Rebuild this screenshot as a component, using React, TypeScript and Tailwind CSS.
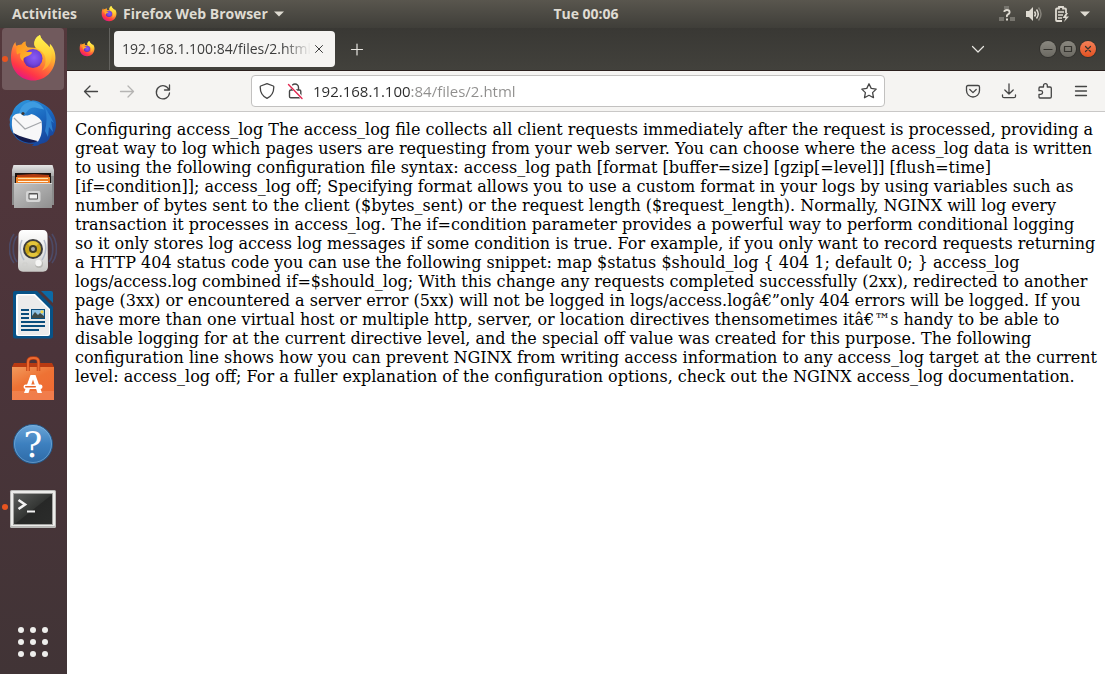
import React, { useId } from "react";

type IconProps = { className?: string };

function FirefoxIcon({ className = "size-12" }: IconProps) {
  const id = useId();
  const u = (n: string) => `url(#${id}${n})`;
  return (
    <svg viewBox="0 0 48 48" className={`${className} overflow-visible`} aria-hidden="true">
      <defs>
        <linearGradient id={`${id}a`} x1="0.8" y1="0.1" x2="0.3" y2="1">
          <stop offset="0" stopColor="#fff44f" />
          <stop offset="0.3" stopColor="#ffb52e" />
          <stop offset="0.58" stopColor="#ff6a3a" />
          <stop offset="0.8" stopColor="#ff3647" />
          <stop offset="1" stopColor="#e31587" />
        </linearGradient>
        <linearGradient id={`${id}b`} x1="0.5" y1="0" x2="0.5" y2="1">
          <stop offset="0" stopColor="#fff44f" />
          <stop offset="0.5" stopColor="#ffd53a" />
          <stop offset="1" stopColor="#ff9a2c" />
        </linearGradient>
        <radialGradient id={`${id}c`} cx="0.55" cy="0.45" r="0.6">
          <stop offset="0" stopColor="#8a5cf6" />
          <stop offset="0.6" stopColor="#7245dd" />
          <stop offset="1" stopColor="#5b2aa8" />
        </radialGradient>
        <linearGradient id={`${id}d`} x1="0" y1="0" x2="1" y2="1">
          <stop offset="0" stopColor="#ff8f1f" />
          <stop offset="1" stopColor="#ffbd2e" />
        </linearGradient>
      </defs>
      <path fill={u("a")} d="M2 23C2 17 3 11 6.5 7c0 1.800.4 3 1.300 4 1.500-1 3-1.400 4.700-1.300C13.500 8.300 14.700 7.200 16.500 6.500c-.5 2.500.2 4.300 2 5.800L27 13c-2-2.300-2.300-5-1-8 1-2.300 2.700-4 5-5 .6 3.200 2.800 5.500 5.600 7.900 1.500 1.300 2.900 2.700 4 4.300.4-1.100.4-2.200.2-3.500C44.500 12 46.500 17 46.400 23 46 36 36.500 45.500 24.200 45.500 12 45.500 2.200 36 2 23z" />
      <circle cx="24" cy="23.500" r="9.500" fill={u("c")} />
      <path fill={u("b")} d="M27 13c-2-2.300-2.300-5-1-8 1-2.300 2.700-4 5-5 .6 3.200 2.800 5.500 5.600 7.900C41 11.700 43.500 16.500 42.500 23c-.8 6-4.500 10.500-9.500 12.500 3-3.500 4-7.500 3.500-12C35.800 18.500 32 15.500 27 13z" />
      <path fill={u("d")} d="M7.800 11c1.500-1 3-1.400 4.700-1.300 1-1.400 2.200-2.500 4-3.200-.5 2.500.2 4.300 2 5.800-1.800 1.200-2.800 2.700-2.900 4.200 2 .5 4.800.4 7.400.8-.3 2.100-2.700 3.300-5.500 4.200-2 .7-3.600 2-3.600 4.500-2.900-2-3.500-5-2.400-8-1.400.3-2.400.7-3.500 1.500-.8-2.900-.9-5.900-.2-8.500z" />
    </svg>
  );
}

function ThunderbirdIcon() {
  return (
    <svg viewBox="0 0 48 48" className="size-12" aria-hidden="true">
      <defs>
        <linearGradient id="tbBlue" x1="0.2" y1="0" x2="0.8" y2="1">
          <stop offset="0" stopColor="#2f96dc" />
          <stop offset="0.5" stopColor="#1a67bf" />
          <stop offset="1" stopColor="#173f95" />
        </linearGradient>
      </defs>
      <path fill="url(#tbBlue)" d="M1 23c-1-3 0-6 2-8C5 7 12 2 18 1c2 0 3 0 4 1 3-1 7 0 10 2 7 3 12 8 14 15 2 7 1 12-2 17l-3 1c0 3-3 6-6 7l-4 1c-2 2-5 2-8 2l2-2C16 45 8 42 5 36L3 33c-2-3-3-7-2-10z" />
      <path fill="#2b7fd0" d="M36 8l9 16-3-2 2 11-4-5-1 10-3-6c2-8 2-16 0-24z" />
      <path fill="#3e9be0" d="M10 15C11 8 16 3 23 2.500c6 .5 10 4 12 8l-9-2c-7-.5-8 6-13 9.500 0-2-1-3-3-3z" />
      <path fill="#f7f7f8" d="M3.500 18c2-3 5-4 8-3.500l3 2.500c3-1 5 0 8-2 4 1 7 3 10 7C33.500 30 33 37 29 42.500 20 41 10 39 4.500 34 2.500 29 2.500 23 3.500 18z" />
      <path d="M5 19l11 11 16.500-7" fill="none" stroke="#a3a6aa" strokeWidth="1.200" />
      <circle cx="14" cy="14.500" r="1.600" fill="#3c3634" />
      <path fill="#151c4c" d="M4.500 34c7 4 16 6 24 8-2 1.500-6 2-10 1.500C12 42.500 7 39 4.500 34z" />
    </svg>
  );
}

function FilesIcon() {
  return (
    <svg viewBox="0 0 48 48" className="size-12" aria-hidden="true">
      <defs>
        <linearGradient id="cabFront" x1="0" y1="0" x2="1" y2="1">
          <stop offset="0" stopColor="#c4c4c4" />
          <stop offset="0.5" stopColor="#a9a9a9" />
          <stop offset="1" stopColor="#8f8f8f" />
        </linearGradient>
        <linearGradient id="cabTop" x1="0" y1="0" x2="0" y2="1">
          <stop offset="0" stopColor="#e6e6e6" />
          <stop offset="1" stopColor="#a8a8a8" />
        </linearGradient>
      </defs>
      <path fill="#8b8b8b" d="M3 8h42v34H3z" />
      <path fill="url(#cabTop)" d="M4.500 2h39L45 7v6H3V7z" />
      <path fill="#1c1412" d="M6 10h36v11H6z" />
      <path fill="#b23c10" d="M8 12l17-1 15 1v4H8z" />
      <path fill="#f08127" d="M7 14h34v6H7z" />
      <path fill="#ffe0a8" d="M9 15h30v1H9z" />
      <path fill="#fff4df" d="M9 18h30v1H9z" />
      <path fill="url(#cabFront)" d="M5 20h38v25H5z" />
      <path fill="#d8d8d8" d="M5 20h38v1H5z" />
      <rect x="17" y="28" width="14.500" height="11" rx="2" fill="#d5d5d5" />
      <rect x="19.500" y="30" width="9.500" height="6.500" rx="1" fill="#555" />
      <rect x="20.500" y="31.500" width="7.500" height="4" fill="#f3f3f3" />
    </svg>
  );
}

function SpeakerIcon() {
  return (
    <svg viewBox="0 0 48 48" className="size-12" aria-hidden="true">
      <defs>
        <linearGradient id="spk" x1="0" y1="0" x2="0" y2="1">
          <stop offset="0" stopColor="#ffffff" />
          <stop offset="0.6" stopColor="#e2e2e0" />
          <stop offset="1" stopColor="#c9c9c6" />
        </linearGradient>
      </defs>
      <g fill="none" stroke="#4c639b" strokeOpacity="0.45" strokeWidth="1.700">
        <path d="M8 9C3 15 3 29 8 35M5 7C-1 15-1 29 5 36" />
        <path d="M40 9c5 6 5 20 0 26M43 7c6 8 6 22 0 29" />
      </g>
      <path fill="url(#spk)" d="M14 3h20c3 0 4.500 2 4.500 5L39 39c0 4-2 5.700-5 5.700H14c-3 0-5-2-5-5.700L9.500 8c0-3 1.500-5 4.500-5z" />
      <path fill="none" stroke="#b4bccb" strokeWidth="1.500" d="M13 13c-3 6-2 14 2 20M35 13c3 6 2 14-2 20" />
      <circle cx="24" cy="22" r="10" fill="#3d3d3d" />
      <circle cx="24" cy="22" r="8" fill="#c8a51a" />
      <path d="M24 22l-5.500-5.500a8 8 0 0 1 11 0zM24 22l5.500 5.500a8 8 0 0 1-11 0z" fill="#e3c53b" />
      <circle cx="24" cy="22" r="4" fill="#3f3b28" />
      <circle cx="24" cy="22" r="2" fill="#a8aaa9" />
      <circle cx="30" cy="37" r="4" fill="#b8b8b4" />
      <circle cx="29.500" cy="36" r="3.300" fill="#f5f5f4" />
      <path d="M14 36h4v4h-4z" fill="none" stroke="#cfcfcc" />
    </svg>
  );
}

function WriterIcon() {
  return (
    <svg viewBox="0 0 48 48" className="size-12" aria-hidden="true">
      <path fill="#075287" d="M6 0h22l16 16v29.500a2 2 0 0 1-2 2H6a2 2 0 0 1-2-2V2a2 2 0 0 1 2-2z" />
      <path fill="#0c6aa6" d="M32 0h10a2 2 0 0 1 2 2v10z" />
      <path fill="#fff" d="M7 5a2 2 0 0 1 2-2h17l15 15v25a2 2 0 0 1-2 2H9a2 2 0 0 1-2-2z" />
      <path fill="#ebebeb" d="M9 4.500h16L40 19v23a2 2 0 0 1-2 2H9z" />
      <path fill="#0a4d7c" d="M12 18h8v2h-8zM12 22h8v2h-8zM12 26h8v2h-8zM12 30h24v2H12zM12 34h24v2H12zM12 38h18v2H12zM22 18h14v10H22z" />
      <path fill="#8fc1e3" d="M23 19h12v8H23z" />
      <circle cx="33" cy="20.800" r="1.600" fill="#f5d547" />
      <path fill="#3f4a48" d="M23 27v-2l3-4 3 3 2-2 4 3v2z" />
    </svg>
  );
}

function SoftwareIcon() {
  return (
    <svg viewBox="0 0 48 48" className="size-12" aria-hidden="true">
      <defs>
        <linearGradient id="bag" x1="0" y1="0" x2="0.6" y2="1">
          <stop offset="0" stopColor="#f29a5c" />
          <stop offset="0.5" stopColor="#ee7234" />
          <stop offset="1" stopColor="#ef6a33" />
        </linearGradient>
      </defs>
      <path fill="#b83a12" d="M5 8h38l2 4H3z" />
      <path fill="url(#bag)" d="M3 12h42v33H3z" />
      <path fill="#ffffff" fillOpacity="0.12" d="M3 36h42v9H3z" />
      <path fill="none" stroke="#b93d12" strokeWidth="3.400" d="M19 16V7q0-4 5-4h1q4.500 0 4.500 4v9" />
      <path fill="none" stroke="#ec6a31" strokeWidth="2" d="M19 16V7q0-4 5-4h1q4.500 0 4.500 4v9" />
      <path fill="#fff" d="M21.500 20h5L33 38h-4.500L24 24.500 19.500 38H15z" />
      <rect x="14.500" y="29.500" width="19" height="4.500" rx="2.200" fill="#fff" />
      <rect x="16" y="31" width="11" height="1.500" rx="0.700" fill="#e86427" />
    </svg>
  );
}

function HelpIcon() {
  return (
    <svg viewBox="0 0 48 48" className="size-12" aria-hidden="true">
      <defs>
        <linearGradient id="help" x1="0" y1="0" x2="0" y2="1">
          <stop offset="0" stopColor="#6ba6d8" />
          <stop offset="0.5" stopColor="#3d80bf" />
          <stop offset="1" stopColor="#2e6aa6" />
        </linearGradient>
      </defs>
      <circle cx="24" cy="25" r="19.500" fill="url(#help)" stroke="#255787" />
      <circle cx="24" cy="25" r="18.500" fill="none" stroke="#8cbce2" strokeOpacity="0.5" />
      <text x="24" y="38" textAnchor="middle" fill="#fff" fontSize="35" fontFamily="'DejaVu Serif', serif">?</text>
    </svg>
  );
}

function TerminalIcon() {
  return (
    <svg viewBox="0 0 48 48" className="size-12" aria-hidden="true">
      <defs>
        <linearGradient id="term" x1="0" y1="0" x2="1" y2="1">
          <stop offset="0" stopColor="#5b5d5b" />
          <stop offset="0.5" stopColor="#343634" />
          <stop offset="0.52" stopColor="#272827" />
          <stop offset="1" stopColor="#2b2c2b" />
        </linearGradient>
      </defs>
      <rect x="1" y="7" width="46" height="38" rx="1.500" fill="#b9b9b7" />
      <rect x="2" y="8" width="44" height="35" rx="1" fill="#ececea" />
      <rect x="4" y="10" width="40" height="32" fill="#a2a2a0" />
      <rect x="5" y="11" width="38" height="30" fill="url(#term)" />
      <path d="M9.500 17l6.500 4.500-6.500 4.500" fill="none" stroke="#f3f3f3" strokeWidth="2.600" />
      <path d="M18 28.500h8" stroke="#f3f3f3" strokeWidth="2" />
    </svg>
  );
}

function Stroke({ d, size = "size-4", width = 1.2, className = "" }: { d: string; size?: string; width?: number; className?: string }) {
  return (
    <svg viewBox="0 0 16 16" className={`${size} ${className} shrink-0 overflow-visible`} fill="none" stroke="currentColor" strokeWidth={width} strokeLinecap="round" strokeLinejoin="round" aria-hidden="true">
      <path d={d} />
    </svg>
  );
}

function Caret() {
  return (
    <svg viewBox="0 0 10 6" className="h-1.5 w-2.5 shrink-0 fill-current" aria-hidden="true">
      <path d="M0 .5h10L5 5.500z" />
    </svg>
  );
}

function TopBar() {
  return (
    <header className="flex h-7 shrink-0 items-center bg-linear-to-b from-[#59564e] to-[#3f3e39] font-['Open_Sans','Noto_Sans',sans-serif] text-sm leading-5 font-bold text-[#dfdbd2]">
      <div className="flex flex-1 basis-0 items-center gap-6 pl-3">
        <button type="button">Activities</button>
        <button type="button" className="flex items-center gap-1.5 whitespace-nowrap">
          <FirefoxIcon className="size-4" />
          <span>Firefox Web Browser</span>
          <Caret />
        </button>
      </div>
      <button type="button" className="ml-[70px] whitespace-nowrap">Tue 00:06</button>
      <div className="flex flex-1 basis-0 items-center justify-end pr-[15px]">
        <button type="button" aria-label="System menu" className="flex items-center gap-[11px]">
          <svg viewBox="0 0 16 16" className="size-4" aria-hidden="true">
            <path fill="#77756e" d="M5 0h5v3H5zM0 11h5v4H0zM11 11h5v4h-5z" />
            <path fill="none" stroke="currentColor" strokeWidth="1.900" d="M5.200 5.800Q5.500 4 8 4t2.600 2.200Q10.600 7.500 9 8.400T8 11" />
            <path fill="currentColor" d="M7 12.500h2v2H7z" />
          </svg>
          <svg viewBox="0 0 16 16" className="size-4" aria-hidden="true">
            <path fill="currentColor" d="M0 5h3l4-4v14l-4-4H0z" />
            <path fill="none" stroke="currentColor" strokeWidth="1.500" d="M8.500 5.500q2 2.500 0 5M10.500 3.500q3.500 4.500 0 9" />
            <path fill="none" stroke="#85827a" strokeWidth="1.500" d="M12.500 1.500q5 6.500 0 13" />
          </svg>
          <svg viewBox="0 0 16 16" className="size-4" aria-hidden="true">
            <path fill="none" stroke="currentColor" strokeWidth="1.800" d="M13 7V3.500q0-1-1-1h-2V1H6v1.500H4q-1 0-1 1V14q0 1 1 1h5" />
            <path stroke="currentColor" strokeWidth="1.500" d="M5 6h6M5 9h5M5 12h4" />
            <path fill="currentColor" d="M13 7l-3.500 5h3L11 16l5-5.500h-3L15 7z" />
          </svg>
          <Caret />
        </button>
      </div>
    </header>
  );
}

const apps = [
  { name: "Firefox Web Browser", icon: <FirefoxIcon />, running: true, active: true },
  { name: "Thunderbird Mail", icon: <ThunderbirdIcon /> },
  { name: "Files", icon: <FilesIcon /> },
  { name: "Rhythmbox", icon: <SpeakerIcon /> },
  { name: "LibreOffice Writer", icon: <WriterIcon /> },
  { name: "Ubuntu Software", icon: <SoftwareIcon /> },
  { name: "Help", icon: <HelpIcon /> },
  { name: "Terminal", icon: <TerminalIcon />, running: true },
];

function Dock() {
  return (
    <nav aria-label="Dock" className="flex w-[67px] shrink-0 flex-col gap-0.5 bg-linear-to-b from-[#54383c] via-[#4b343a] to-[#413436] pl-0.5">
      {apps.map((app) => (
        <button
          key={app.name}
          type="button"
          aria-label={app.name}
          className={`relative flex size-[62px] shrink-0 items-center justify-center rounded ${app.active ? "bg-[#715a5d]" : ""}`}
        >
          {app.running && <span className="absolute left-0 size-1.5 rounded-full bg-[#e95420]" />}
          {app.icon}
        </button>
      ))}
      <button type="button" aria-label="Show Applications" className="mt-auto mb-px flex size-[62px] items-center justify-center">
        <svg viewBox="0 0 30 30" className="size-[30px] fill-[#eeeeec]" aria-hidden="true">
          {[3, 15, 27].map((y) => [3, 15, 27].map((x) => <circle key={`${x}-${y}`} cx={x} cy={y} r="3" />))}
        </svg>
      </button>
    </nav>
  );
}

function TabBar() {
  const control = "flex size-4 items-center justify-center rounded-full ring-1 ring-[#33322e]";
  return (
    <div className="flex h-[43px] shrink-0 items-center border-b border-[#2b201e] bg-linear-to-b from-[#393834] to-[#42413c] text-[#e8e6e1]">
      <button type="button" aria-label="Pinned tab" className="flex h-full w-[43px] items-center justify-center border-r border-[#63625e] pr-0.5">
        <FirefoxIcon className="size-4" />
      </button>
      <div className="ml-1 flex h-9 w-[221px] items-center rounded bg-[#f5f4f2] px-2 text-[#3d3d3d]">
        <button type="button" className="min-w-0 flex-1 overflow-hidden mask-r-from-85% text-left font-['Open_Sans','Noto_Sans',sans-serif] text-sm leading-5 whitespace-nowrap">
          192.168.1.100:84/files/2.html
        </button>
        <button type="button" aria-label="Close tab" className="flex size-4 items-center justify-center">
          <Stroke d="M4.500 4.500l7 7M11.500 4.500l-7 7" width={1} />
        </button>
      </div>
      <button type="button" aria-label="New tab" className="ml-3 flex size-5 items-center justify-center">
        <Stroke d="M2.500 8.500h11M8 3v11" />
      </button>
      <button type="button" aria-label="List all tabs" className="mr-[54px] ml-auto flex size-4 items-center justify-center">
        <Stroke d="M2.500 5.500L8 11l5.500-5.500" />
      </button>
      <div className="flex gap-1 pr-[9px] text-[#35342f]">
        <button type="button" aria-label="Minimize" className={`${control} bg-linear-to-b from-[#8a8880] to-[#6b6962]`}>
          <Stroke d="M4 8.500h8" />
        </button>
        <button type="button" aria-label="Maximize" className={`${control} bg-linear-to-b from-[#8a8880] to-[#6b6962]`}>
          <Stroke d="M4.500 5.500h7v5h-7z" />
        </button>
        <button type="button" aria-label="Close" className={`${control} bg-linear-to-b from-[#f58057] to-[#e2511f]`}>
          <Stroke d="M5.500 5.500l5 5M10.500 5.500l-5 5" />
        </button>
      </div>
    </div>
  );
}

function ToolButton({ label, d, disabled }: { label: string; d: string; disabled?: boolean }) {
  return (
    <button type="button" aria-label={label} disabled={disabled} className="flex size-8 shrink-0 items-center justify-center disabled:text-[#b5b4b3]">
      <Stroke d={d} width={1.3} />
    </button>
  );
}

function Toolbar() {
  return (
    <div className="flex h-[41px] shrink-0 items-center border-b border-[#c9c8c7] bg-[#f5f4f2] px-2 text-[#454545]">
      <div className="flex gap-1">
        <ToolButton label="Back" d="M1.500 8.500h13M7 3L1.500 8.500 7 14" />
        <ToolButton label="Forward" disabled d="M14.500 8.500h-13M9 3L14.500 8.500 9 14" />
        <ToolButton label="Reload" d="M14.500 2V7H9.500M14 6.700A6.600 6.600 0 1 0 14.500 10" />
      </div>
      <div className="mx-[72px] flex h-8 min-w-0 flex-1 items-center rounded border border-[#c2c1c0] bg-white px-[7px]">
        <button type="button" aria-label="Tracking protection">
          <Stroke d="M8 .7L14.300 3Q14.800 3.200 14.800 4C14.800 9.500 12 13.500 8 15.300 4 13.500 1.200 9.500 1.200 4Q1.200 3.200 1.700 3z" width={1.3} />
        </button>
        <button type="button" aria-label="Connection is not secure" className="ml-3">
          <svg viewBox="0 0 16 16" className="size-4 overflow-visible" fill="none" strokeWidth="1.400" strokeLinecap="round" aria-hidden="true">
            <path stroke="currentColor" d="M4.500 7V4.500a3.500 3.500 0 0 1 7 0V7M4 7h8.500q1.300 0 1.300 1.300v5.200q0 1.300-1.300 1.300H3.800q-1.300 0-1.300-1.300V8.300Q2.500 7 4 7z" />
            <path stroke="#fff" strokeWidth="3" d="M2.500 1.500l12 13" />
            <path stroke="#e22850" d="M1.500 1.500l13.500 14" />
          </svg>
        </button>
        <input
          type="text"
          aria-label="Address"
          defaultValue="192.168.1.100:84/files/2.html"
          className="ml-2.5 min-w-0 flex-1 bg-linear-to-r from-[#2b2b2b] from-[98px] to-[#8f8e8d] to-[98px] bg-clip-text font-['Open_Sans','Noto_Sans',sans-serif] text-[15px] leading-5 text-transparent caret-black outline-none"
        />
        <button type="button" aria-label="Bookmark this page">
          <Stroke d="M8 .8L10.200 5.400 15.200 6.100 11.600 9.600 12.500 14.700 8 12.300 3.500 14.700 4.400 9.600.8 6.100 5.800 5.400z" width={1.3} />
        </button>
      </div>
      <div className="flex gap-1">
        <ToolButton label="Save to Pocket" d="M3 2.500h10q1.500 0 1.500 1.500v3.500a6.500 6.500 0 0 1-13 0V4Q1.500 2.500 3 2.500zM4.800 6.500L8 9.600l3.200-3.100" />
        <ToolButton label="Downloads" d="M8 .8v10M3.800 7L8 11l4.200-4M1.500 12v1.200q0 1.500 1.500 1.500h10q1.500 0 1.500-1.500V12" />
        <ToolButton label="Extensions" d="M6.500 4V2.500a1.900 1.900 0 0 1 3.800 0V4H13q1.300 0 1.300 1.300V13.700q0 1.300-1.300 1.300H3Q2 15 2 14v-2.700h1.800a1.700 1.700 0 0 0 0-3.600H2V5.300Q2 4 3 4z" />
        <ToolButton label="Menu" d="M2.500 3.500h11M2.500 8h11M2.500 12.500h11" />
      </div>
    </div>
  );
}

const article =
  "Configuring access_log The access_log file collects all client requests immediately after the request is processed, providing a great way to log which pages users are requesting from your web server. You can choose where the acess_log data is written to using the following configuration file syntax: access_log path [format [buffer=size] [gzip[=level]] [flush=time] [if=condition]]; access_log off; Specifying format allows you to use a custom format in your logs by using variables such as number of bytes sent to the client ($bytes_sent) or the request length ($request_length). Normally, NGINX will log every transaction it processes in access_log. The if=condition parameter provides a powerful way to perform conditional logging so it only stores log access log messages if some condition is true. For example, if you only want to record requests returning a HTTP 404 status code you can use the following snippet: map $status $should_log { 404 1; default 0; } access_log logs/access.log combined if=$should_log; With this change any requests completed successfully (2xx), redirected to another page (3xx) or encountered a server error (5xx) will not be logged in logs/access.logâ€”only 404 errors will be logged. If you have more than one virtual host or multiple http, server, or location directives thensometimes itâ€™s handy to be able to disable logging for at the current directive level, and the special off value was created for this purpose. The following configuration line shows how you can prevent NGINX from writing access information to any access_log target at the current level: access_log off; For a fuller explanation of the configuration options, check out the NGINX access_log documentation.";

export default function App() {
  return (
    <div className="flex min-h-screen flex-col bg-white">
      <TopBar />
      <div className="flex flex-1">
        <Dock />
        <div className="flex min-w-0 flex-1 flex-col">
          <TabBar />
          <Toolbar />
          <main className="flex-1 p-2 font-['DejaVu_Serif',serif] text-base leading-[19px] text-black">
            <p>{article}</p>
          </main>
        </div>
      </div>
    </div>
  );
}
